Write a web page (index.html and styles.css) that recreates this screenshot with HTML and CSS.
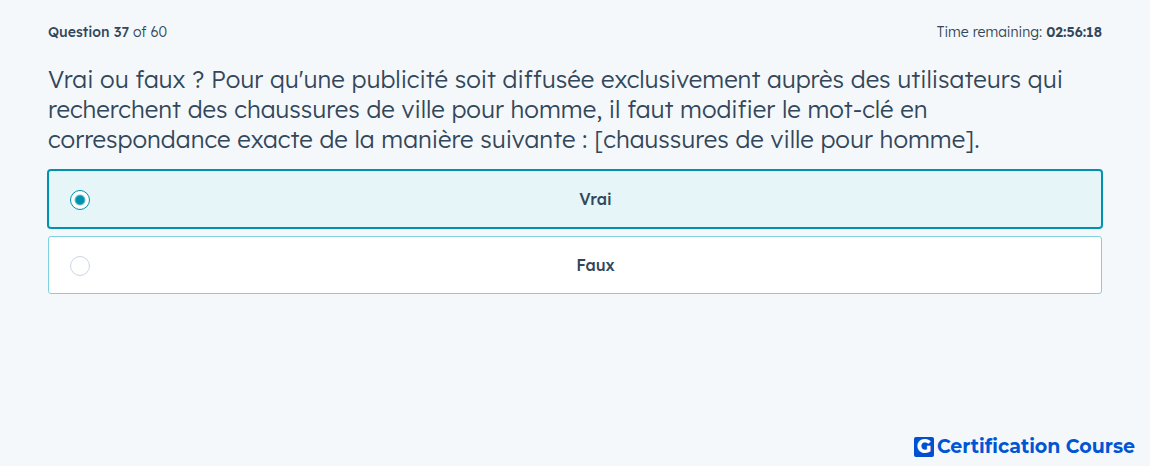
FILE: index.html
```
<!DOCTYPE html>
<html lang="fr">
<head>
  <meta charset="UTF-8">
  <meta name="viewport" content="width=device-width, initial-scale=1">
  <title>Certification Course</title>
  <link rel="stylesheet" href="styles.css">
</head>
<body>
  <header class="status">
    <div class="progress"><strong>Question 37</strong> of 60</div>
    <div>Time remaining: <strong>02:56:18</strong></div>
  </header>

  <main>
    <form>
      <h1 id="question">Vrai ou faux ? Pour qu'une publicité soit diffusée exclusivement auprès des utilisateurs qui recherchent des chaussures de ville pour homme, il faut modifier le mot-clé en correspondance exacte de la manière suivante : [chaussures de ville pour homme].</h1>
      <div class="answers" role="radiogroup" aria-labelledby="question">
        <label class="answer">
          <input type="radio" name="answer" value="vrai" checked>
          <span>Vrai</span>
        </label>
        <label class="answer">
          <input type="radio" name="answer" value="faux">
          <span>Faux</span>
        </label>
      </div>
    </form>
  </main>

  <footer class="brand">
    <span class="brand-mark">G</span>
    <span>Certification Course</span>
  </footer>
</body>
</html>
```

FILE: styles.css
```
* { box-sizing: border-box; }
body {
  display: flex;
  flex-direction: column;
  min-height: 100vh;
  margin: 0;
  padding: 20px 48px 8px;
  font-family: "Lexend Deca", Inter, sans-serif;
  font-weight: 300;
  color: #33475b;
  background: #f5f8fa;
}
.status {
  display: flex;
  justify-content: space-between;
  font-size: 14px;
  line-height: 24px;
}
.status strong { font-weight: 600; }
.status .progress strong { font-weight: 500; }
main { flex: 1; }
h1 {
  margin: 20px 0 16px;
  font-size: 24px;
  font-weight: 300;
  line-height: 30px;
}
.answers {
  display: grid;
  gap: 8px;
}
.answer {
  display: flex;
  align-items: center;
  height: 58px;
  padding-left: 21px;
  border: 1px solid #7fd1de;
  border-radius: 3px;
  background: #fff;
  font-size: 16px;
  font-weight: 500;
  cursor: pointer;
}
.answer:has(input:checked) {
  border-color: #0091ae;
  box-shadow: 0 0 0 1px #0091ae;
  background: #e5f5f8;
}
.answer span {
  flex: 1;
  text-align: center;
}
.answer input {
  appearance: none;
  width: 20px;
  height: 20px;
  margin: 2px 0 0;
  border: 1px solid #cbd6e2;
  border-radius: 50%;
  background: #fff;
}
.answer input:checked {
  border-color: #0091ae;
  background: radial-gradient(circle, #0091ae 4px, #fff 6px);
}
.brand {
  display: flex;
  align-items: center;
  align-self: flex-end;
  gap: 3px;
  margin-right: -33px;
  font-family: Montserrat, Inter, sans-serif;
  font-size: 19px;
  font-weight: 700;
  line-height: 22px;
  color: #0055d4;
}
.brand-mark {
  width: 20px;
  height: 20px;
  border-radius: 2px;
  background: #0050cf;
  color: #fff;
  font-size: 19px;
  font-weight: 800;
  line-height: 20px;
  text-align: center;
}
```
